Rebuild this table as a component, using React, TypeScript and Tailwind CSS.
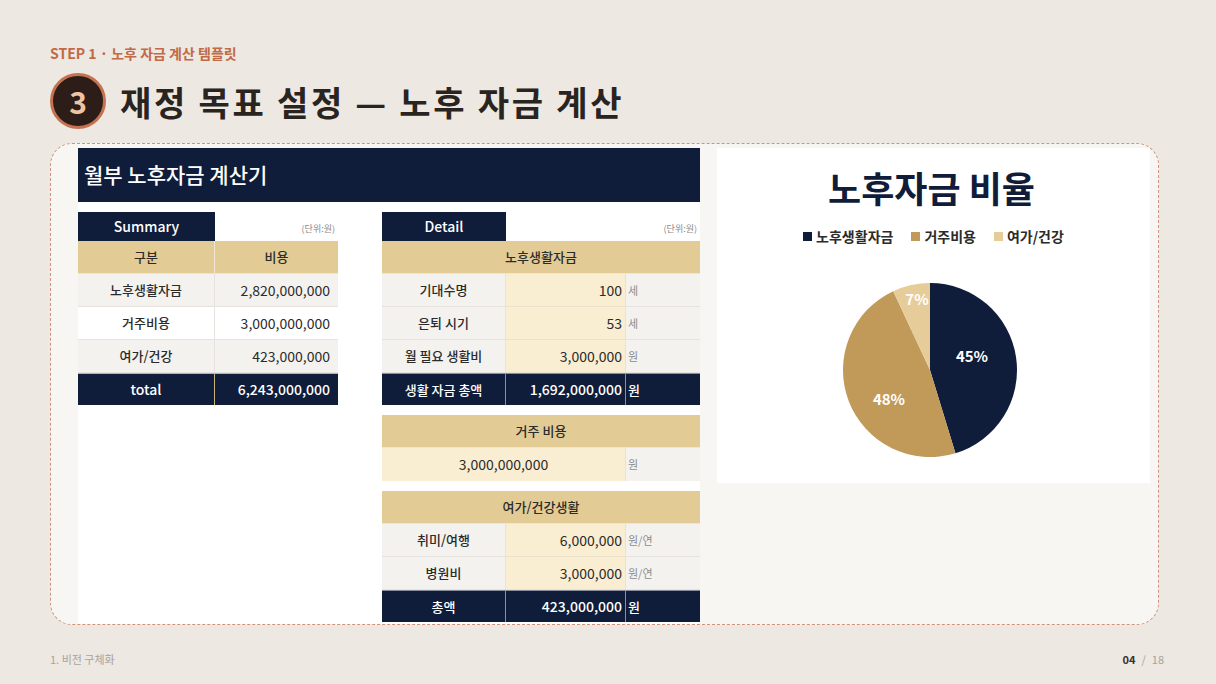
import React from 'react'

const font = { fontFamily: '"Noto Sans CJK KR", "Noto Sans", sans-serif' }

function Tab({ label }: { label: string }) {
  return (
    <div className="flex h-[29px] items-end justify-between">
      <div className="flex h-[29px] w-[124px] items-center justify-center bg-[#0f1d3a] text-[14px] font-medium text-white">
        {label}
      </div>
      <span className="pb-[6px] pr-[3px] text-[9px] text-[#8a8a8a]">(단위:원)</span>
    </div>
  )
}

function SummaryTable() {
  const rows = [
    { k: '노후생활자금', v: '2,820,000,000', bg: 'bg-[#f4f2ef]' },
    { k: '거주비용', v: '3,000,000,000', bg: 'bg-white' },
    { k: '여가/건강', v: '423,000,000', bg: 'bg-[#f4f2ef]' },
  ]
  return (
    <div className="w-[260px]">
      <div className="flex h-[29px] items-end">
        <div className="flex h-[29px] w-[137px] items-center justify-center bg-[#0f1d3a] text-[14px] font-medium text-white">
          Summary
        </div>
        <span className="ml-auto pb-[6px] pr-[3px] text-[9px] text-[#8a8a8a]">(단위:원)</span>
      </div>
      <div className="grid grid-cols-[137px_123px] text-[13px] text-[#2b2b2b]">
        <div className="flex h-[33px] items-center justify-center border-b border-r border-[#efe6d2] bg-[#e3cb96] font-medium">구분</div>
        <div className="flex h-[33px] items-center justify-center border-b border-[#efe6d2] bg-[#e3cb96] font-medium">비용</div>
        {rows.map((r) => (
          <React.Fragment key={r.k}>
            <div className={`flex h-[33px] items-center justify-center border-b border-r border-[#e6e3de] font-medium ${r.bg}`}>{r.k}</div>
            <div className={`flex h-[33px] items-center justify-end border-b border-[#e6e3de] pr-[8px] text-[14px] ${r.bg}`}>{r.v}</div>
          </React.Fragment>
        ))}
        <div className="flex h-[32px] items-center justify-center border-r border-t border-[#c9b27e] bg-[#0f1d3a] text-[14px] font-medium text-white">total</div>
        <div className="flex h-[32px] items-center justify-end border-t border-[#c9b27e] bg-[#0f1d3a] pr-[8px] text-[14px] font-medium text-white">6,243,000,000</div>
      </div>
    </div>
  )
}

function SectionHead({ label }: { label: string }) {
  return (
    <div className="col-span-3 flex h-[33px] items-center justify-center border-b border-[#efe6d2] bg-[#e3cb96] font-medium">
      {label}
    </div>
  )
}

function DetailRow({ k, v, unit }: { k: string; v: string; unit: string }) {
  return (
    <>
      <div className="flex h-[33px] items-center justify-center border-b border-r border-[#e6e3de] bg-[#f4f2ef] font-medium">{k}</div>
      <div className="flex h-[33px] items-center justify-end border-b border-r border-[#ece2cb] bg-[#f9edd2] pr-[3px] text-[14px]">{v}</div>
      <div className="flex h-[33px] items-center border-b border-[#e6e3de] bg-[#f4f2ef] pl-[2px] text-[11px] text-[#8d8d8d]">{unit}</div>
    </>
  )
}

function TotalRow({ k, v }: { k: string; v: string }) {
  return (
    <>
      <div className="flex h-[32px] items-center justify-center border-r border-t border-[#8a8fa0] bg-[#0f1d3a] font-medium text-white">{k}</div>
      <div className="flex h-[32px] items-center justify-end border-r border-t border-[#8a8fa0] bg-[#0f1d3a] pr-[3px] text-[14px] font-medium text-white">{v}</div>
      <div className="flex h-[32px] items-center border-t border-[#8a8fa0] bg-[#0f1d3a] pl-[2px] text-[13px] font-medium text-white">원</div>
    </>
  )
}

function DetailTable() {
  return (
    <div className="flex w-[318px] flex-col">
      <Tab label="Detail" />
      <div className="grid grid-cols-[124px_120px_74px] text-[13px] text-[#2b2b2b]">
        <SectionHead label="노후생활자금" />
        <DetailRow k="기대수명" v="100" unit="세" />
        <DetailRow k="은퇴 시기" v="53" unit="세" />
        <DetailRow k="월 필요 생활비" v="3,000,000" unit="원" />
        <TotalRow k="생활 자금 총액" v="1,692,000,000" />
      </div>
      <div className="mt-[10px] grid grid-cols-[124px_120px_74px] text-[13px] text-[#2b2b2b]">
        <SectionHead label="거주 비용" />
        <div className="col-span-2 flex h-[33px] items-center justify-center border-r border-[#ece2cb] bg-[#f9edd2] text-[14px]">3,000,000,000</div>
        <div className="flex h-[33px] items-center bg-[#f4f2ef] pl-[2px] text-[11px] text-[#8d8d8d]">원</div>
      </div>
      <div className="mt-[10px] grid grid-cols-[124px_120px_74px] text-[13px] text-[#2b2b2b]">
        <SectionHead label="여가/건강생활" />
        <DetailRow k="취미/여행" v="6,000,000" unit="원/연" />
        <DetailRow k="병원비" v="3,000,000" unit="원/연" />
        <TotalRow k="총액" v="423,000,000" />
      </div>
    </div>
  )
}

function Pie() {
  const cx = 100
  const cy = 100
  const r = 87
  const pt = (deg: number) => {
    const a = ((deg - 90) * Math.PI) / 180
    return `${(cx + r * Math.cos(a)).toFixed(2)} ${(cy + r * Math.sin(a)).toFixed(2)}`
  }
  const slice = (a0: number, a1: number) =>
    `M${cx} ${cy} L${pt(a0)} A${r} ${r} 0 ${a1 - a0 > 180 ? 1 : 0} 1 ${pt(a1)} Z`
  return (
    <svg width="200" height="200" viewBox="0 0 200 200">
      <path d={slice(0, 163)} fill="#0f1d3a" />
      <path d={slice(163, 335)} fill="#c19a5a" />
      <path d={slice(335, 360)} fill="#e6cc98" />
      <text x="142" y="92" fill="#ffffff" fontSize="15" fontWeight="600" textAnchor="middle" style={font}>45%</text>
      <text x="59" y="135" fill="#ffffff" fontSize="15" fontWeight="600" textAnchor="middle" style={font}>48%</text>
      <text x="87" y="35" fill="#ffffff" fontSize="15" fontWeight="600" textAnchor="middle" style={font}>7%</text>
    </svg>
  )
}

export default function App() {
  return (
    <div className="flex h-[684px] w-[1216px] flex-col bg-[#ede8e2] px-[50px]" style={font}>
      <div className="pt-[43px] text-[14px] font-bold text-[#c26a45]">STEP 1 · 노후 자금 계산 템플릿</div>
      <div className="mt-[9px] flex items-center gap-[14px]">
        <div className="flex h-[56px] w-[56px] items-center justify-center rounded-full border-[3px] border-[#c4724f] bg-[#2c1d18] text-[30px] font-bold text-[#f1c3a0]">
          3
        </div>
        <h1 className="text-[34px] font-bold tracking-[0.08em] text-[#2a2421]">재정 목표 설정 — 노후 자금 계산</h1>
      </div>

      <div className="mr-[7px] mt-[14px] flex h-[482px] gap-[17px] overflow-hidden rounded-[22px] border border-dashed border-[#d0927a] bg-[#f8f6f3] pl-[27px] pr-[8px] pt-[4px]">
        <div className="w-[622px] shrink-0 bg-white">
          <div className="flex h-[54px] items-center bg-[#0f1d3a] pl-[6px] text-[21px] font-medium text-white">
            월부 노후자금 계산기
          </div>
          <div className="mt-[10px] flex gap-[44px]">
            <SummaryTable />
            <DetailTable />
          </div>
        </div>
        <div className="flex h-[335px] w-[433px] shrink-0 flex-col items-center bg-white">
          <div className="mt-[12px] mr-[4px] text-[36px] font-bold text-[#0f1d3a]">노후자금 비율</div>
          <div className="mt-[12px] flex items-center gap-[18px] text-[14px] font-bold text-[#2b2b2b]">
            <span className="flex items-center gap-[4px]"><span className="h-[9px] w-[9px] bg-[#0f1d3a]" />노후생활자금</span>
            <span className="flex items-center gap-[4px]"><span className="h-[9px] w-[9px] bg-[#c19a5a]" />거주비용</span>
            <span className="flex items-center gap-[4px]"><span className="h-[9px] w-[9px] bg-[#e6cc98]" />여가/건강</span>
          </div>
          <div className="mr-[8px] mt-[23px]">
            <Pie />
          </div>
        </div>
      </div>

      <div className="mt-[26px] flex items-center justify-between text-[11px] text-[#a8a39d]">
        <span>1. 비전 구체화</span>
        <span className="pr-[2px]">
          <span className="font-bold text-[#3a3330]">04</span>
          <span className="mx-[6px]">/</span>18
        </span>
      </div>
    </div>
  )
}
